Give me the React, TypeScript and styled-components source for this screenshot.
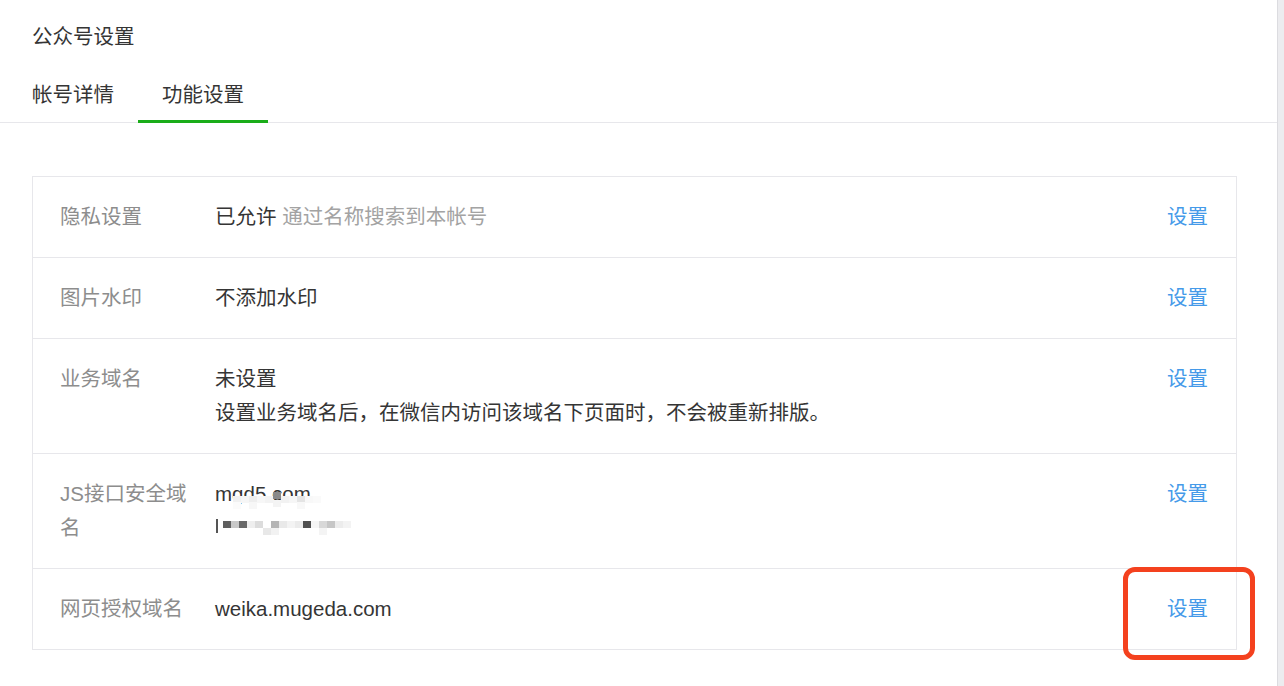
import styled, { createGlobalStyle } from 'styled-components';

const GlobalStyle = createGlobalStyle`
  html, body {
    margin: 0;
    padding: 0;
    background: #ffffff;
  }
  body {
    font-family: "Liberation Sans", "Noto Sans CJK SC", sans-serif;
    color: #353535;
  }
`;

type Cell = { x: number; y: number; c: string };

// pixelated patch over the hidden domain
const topMosaic: Cell[] = [
  { x: 18, y: 19, c: '#f1f1f1' },
  { x: 26, y: 19, c: '#f6f6f6' },
  { x: 34, y: 19, c: '#eeeeee' },
  { x: 42, y: 19, c: '#f7f7f7' },
  { x: 50, y: 19, c: '#f3f3f3' },
  { x: 58, y: 15, c: '#8a8a8a' },
  { x: 66, y: 19, c: '#f2f2f2' },
  { x: 74, y: 19, c: '#f6f6f6' },
  { x: 82, y: 19, c: '#e4e4e4' },
  { x: 90, y: 19, c: '#f8f8f8' },
  { x: 98, y: 19, c: '#fafafa' },
  { x: 18, y: 25, c: '#fbfbfb' },
  { x: 34, y: 25, c: '#f7f7f7' },
  { x: 58, y: 23, c: '#f4f4f4' },
  { x: 82, y: 25, c: '#f8f8f8' },
];

const bottomMosaic: Cell[] = [
  { x: 8, y: 10, c: '#5f5f5f' },
  { x: 16, y: 10, c: '#c8c8c8' },
  { x: 24, y: 10, c: '#686868' },
  { x: 32, y: 10, c: '#eeeeee' },
  { x: 40, y: 10, c: '#dcdcdc' },
  { x: 48, y: 17, c: '#e8e8e8' },
  { x: 56, y: 10, c: '#b5b5b5' },
  { x: 64, y: 10, c: '#e9e9e9' },
  { x: 72, y: 10, c: '#f3f3f3' },
  { x: 80, y: 10, c: '#ebebeb' },
  { x: 88, y: 10, c: '#4f4f4f' },
  { x: 96, y: 10, c: '#f6f6f6' },
  { x: 104, y: 10, c: '#d8d8d8' },
  { x: 112, y: 10, c: '#c6c6c6' },
  { x: 120, y: 10, c: '#ececec' },
  { x: 128, y: 10, c: '#f3f3f3' },
  { x: 56, y: 17, c: '#f2f2f2' },
  { x: 104, y: 17, c: '#f4f4f4' },
];

const Mosaic = ({ cells }: { cells: Cell[] }) => (
  <MosaicLayer>
    {cells.map((cell, i) => (
      <MosaicCell key={i} style={{ left: cell.x, top: cell.y, background: cell.c }} />
    ))}
  </MosaicLayer>
);

const SetLink = ({ highlight }: { highlight?: boolean }) => (
  <LinkWrap>
    <Link href="#">设置</Link>
    {highlight && <Highlight />}
  </LinkWrap>
);

const App = () => {
  return (
    <>
      <GlobalStyle />
      <Page>
        <Main>
          <Header>
            <Title>公众号设置</Title>
            <Tabs>
              <Tab>帐号详情</Tab>
              <Tab active>功能设置</Tab>
            </Tabs>
          </Header>

          <Table>
            <Row>
              <Label>隐私设置</Label>
              <Value>
                已允许 <Hint>通过名称搜索到本帐号</Hint>
              </Value>
              <SetLink />
            </Row>
            <Row>
              <Label>图片水印</Label>
              <Value>不添加水印</Value>
              <SetLink />
            </Row>
            <Row>
              <Label>业务域名</Label>
              <Value>
                <div>未设置</div>
                <div>设置业务域名后，在微信内访问该域名下页面时，不会被重新排版。</div>
              </Value>
              <SetLink />
            </Row>
            <Row>
              <Label>JS接口安全域名</Label>
              <Value>
                <Line>
                  mgd5.com
                  <Mosaic cells={topMosaic} />
                </Line>
                <Line>
                  <Bar />
                  <Mosaic cells={bottomMosaic} />
                </Line>
              </Value>
              <SetLink />
            </Row>
            <Row>
              <Label>网页授权域名</Label>
              <Value>weika.mugeda.com</Value>
              <SetLink highlight />
            </Row>
          </Table>
        </Main>
        <Side />
      </Page>
    </>
  );
};

export default App;

const Page = styled.div`
  display: flex;
  width: 1284px;
  height: 686px;
  overflow: hidden;
`;

const Main = styled.div`
  flex: 1;
  border-right: 1px solid #dcdce0;
  background: #ffffff;
`;

const Side = styled.div`
  width: 6px;
  background: #ececef;
`;

const Header = styled.div`
  padding-top: 23px;
`;

const Title = styled.div`
  padding-left: 32px;
  font-size: 20.5px;
  line-height: 28px;
  color: #353535;
`;

const Tabs = styled.div`
  display: flex;
  padding-left: 8px;
  border-bottom: 1px solid #e7e7eb;
`;

const Tab = styled.div<{ active?: boolean }>`
  padding: 30px 24px 11px;
  font-size: 20.5px;
  line-height: 28px;
  color: #353535;
  border-bottom: 3px solid ${(p) => (p.active ? '#1aad19' : 'transparent')};
  margin-bottom: -1px;
`;

const Table = styled.div`
  margin: 53px 40px 0 32px;
  border: 1px solid #e7e7eb;
`;

const Row = styled.div`
  display: flex;
  align-items: flex-start;
  padding: 23px 28px 23px 27px;
  font-size: 20.5px;
  line-height: 34px;

  & + & {
    border-top: 1px solid #e7e7eb;
  }
`;

const Label = styled.div`
  width: 135px;
  margin-right: 20px;
  flex-shrink: 0;
  color: #8d8d8d;
`;

const Value = styled.div`
  flex: 1;
  color: #353535;
`;

const Hint = styled.span`
  color: #a3a3a3;
`;

const Line = styled.div`
  position: relative;
  height: 34px;
`;

const Bar = styled.span`
  display: inline-block;
  width: 2px;
  height: 14px;
  margin-top: 8px;
  margin-left: 1px;
  background: #555555;
  vertical-align: top;
`;

const MosaicLayer = styled.div`
  position: absolute;
  left: 0;
  top: 0;
  width: 150px;
  height: 34px;
`;

const MosaicCell = styled.span`
  position: absolute;
  width: 8px;
  height: 7px;
  filter: blur(0.6px);
`;

const LinkWrap = styled.div`
  position: relative;
  flex-shrink: 0;
`;

const Link = styled.a`
  color: #459ae9;
  text-decoration: none;
`;

const Highlight = styled.div`
  position: absolute;
  left: -44px;
  top: -25px;
  width: 132px;
  height: 93px;
  box-sizing: border-box;
  border: 5px solid #f4411e;
  border-radius: 12px;
  pointer-events: none;
`;
